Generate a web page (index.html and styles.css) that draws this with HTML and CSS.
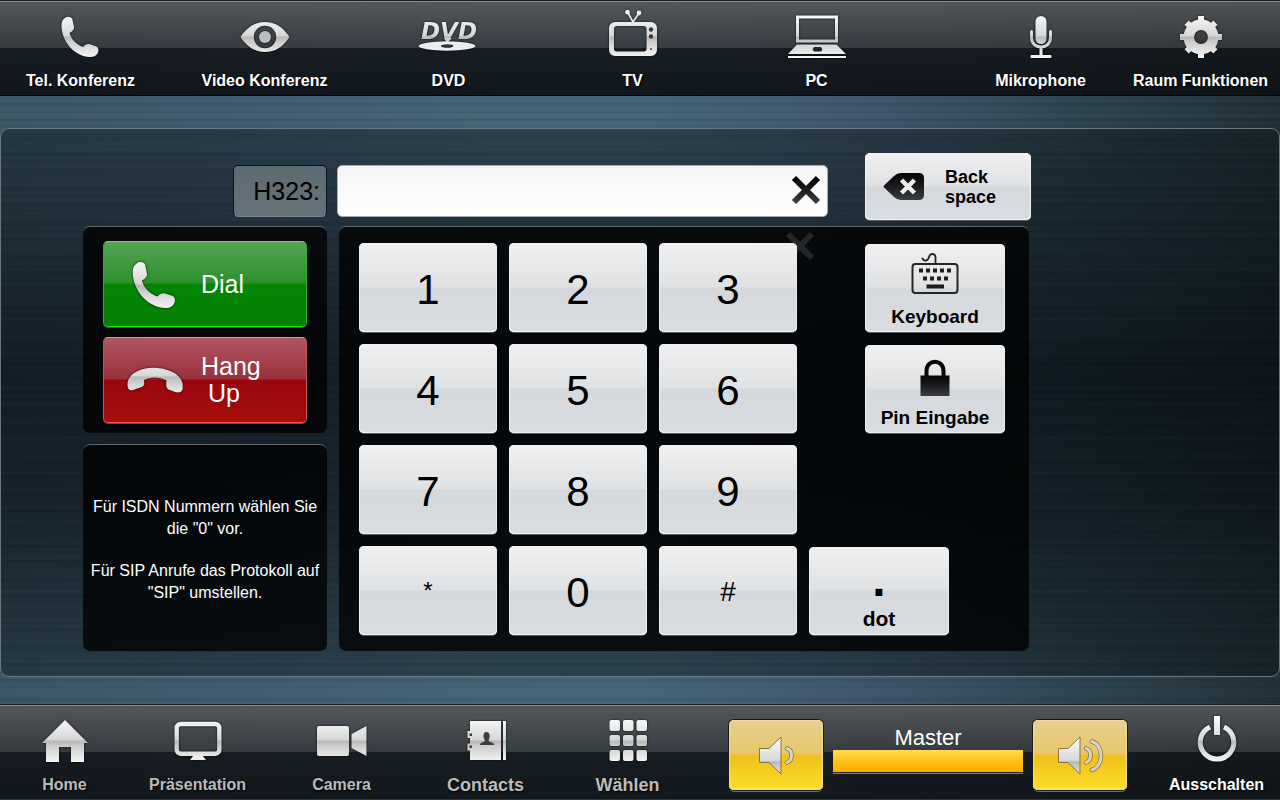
FILE: index.html
```html
<!DOCTYPE html>
<html lang="de">
<head>
<meta charset="utf-8">
<meta name="viewport" content="width=device-width, initial-scale=1">
<title>Video Konferenz</title>
<link rel="stylesheet" href="styles.css">
</head>
<body>
<svg class="defs" width="0" height="0" aria-hidden="true">
  <defs>
    <linearGradient id="metal" gradientUnits="userSpaceOnUse" x1="0" y1="6" x2="0" y2="50">
      <stop offset="0" stop-color="#fafafa"/>
      <stop offset=".5" stop-color="#d6d6d6"/>
      <stop offset=".52" stop-color="#b8b8b8"/>
      <stop offset=".66" stop-color="#d0d0d0"/>
      <stop offset="1" stop-color="#f6f6f6"/>
    </linearGradient>
    <linearGradient id="ink" x1="0" y1="0" x2="0" y2="1">
      <stop offset="0" stop-color="#030303"/>
      <stop offset=".5" stop-color="#1c1c1e"/>
      <stop offset="1" stop-color="#3c3d40"/>
    </linearGradient>
    <symbol id="phone" viewBox="0 0 64 56">
      <path fill="url(#metal)" d="M16 10C18 8.300 21.500 8.300 23.300 11L25 19C25.300 22 22.500 24 20.500 24.800C22 31 27 36.500 34 39C36 36.500 38.500 35.600 41 36.300L47 38.300C50 39.500 50 43 48.500 45.500C47 48 45 49 41 49C25 48.500 12.500 33 12.500 17.500C12.500 14 13.500 11.500 16 10Z"/>
    </symbol>
  </defs>
</svg>

<header class="bar">
  <nav class="sources" aria-label="Quellen">
    <button class="tool" type="button">
      <svg class="tool-icon" viewBox="0 0 64 56"><use href="#phone"/></svg>
      <span>Tel. Konferenz</span>
    </button>
    <button class="tool" type="button">
      <svg class="tool-icon" viewBox="0 0 64 56">
        <path fill="url(#metal)" fill-rule="evenodd" d="M7.500 29C14 19 22 14 32 14S50 19 56.500 29C50 39 42 44 32 44S14 39 7.500 29ZM32 17.800A11.200 11.200 0 1 0 32 40.200A11.200 11.200 0 1 0 32 17.800Z"/>
        <circle cx="32" cy="29" r="6" fill="#bcbdbe"/>
      </svg>
      <span>Video Konferenz</span>
    </button>
    <button class="tool" type="button">
      <svg class="tool-icon" viewBox="0 0 64 56">
        <text class="disc-word" x="32" y="31" text-anchor="middle" fill="url(#metal)">DVD</text>
        <path fill="#cfcfcf" d="M27 30h8l-5 5z"/>
        <path fill="#ededed" fill-rule="evenodd" d="M1.500 38a28.500 4.700 0 1 0 57 0a28.500 4.700 0 1 0-57 0ZM24 38a6.200 1.800 0 1 1 12.400 0a6.200 1.800 0 1 1-12.400 0Z"/>
      </svg>
      <span>DVD</span>
    </button>
    <button class="tool" type="button">
      <svg class="tool-icon" viewBox="0 0 64 56">
        <path stroke="#e4e4e4" stroke-width="1.800" fill="none" d="M26.500 4L32 14L38 5"/>
        <circle cx="26.500" cy="4.200" r="2.400" fill="#eee"/>
        <circle cx="38" cy="5" r="2.400" fill="#eee"/>
        <path fill="url(#metal)" fill-rule="evenodd" d="M14 14H50a6 6 0 0 1 6 6V42a6 6 0 0 1-6 6H14a6 6 0 0 1-6-6V20a6 6 0 0 1 6-6ZM16 18a3 3 0 0 0-3 3V40.500a3 3 0 0 0 3 3H42.500a3 3 0 0 0 3-3V21a3 3 0 0 0-3-3Z"/>
        <circle cx="50" cy="21.500" r="2.200" fill="#343a3e"/>
        <circle cx="50" cy="28.500" r="2.200" fill="#343a3e"/>
        <circle cx="50" cy="41" r="1" fill="#343a3e"/>
      </svg>
      <span>TV</span>
    </button>
    <button class="tool" type="button">
      <svg class="tool-icon" viewBox="0 0 64 56">
        <rect x="12.500" y="9" width="39" height="24" fill="none" stroke="url(#metal)" stroke-width="3"/>
        <path fill="url(#metal)" d="M12 36.500H51.500L61 46H3ZM3 48H61V50H3Z"/>
        <path fill="#20272c" d="M29 39h7l1.500 2.500l-1.500 2h-7l-1.500-2z"/>
      </svg>
      <span>PC</span>
    </button>
  </nav>
  <nav class="room" aria-label="Raum">
    <button class="tool" type="button">
      <svg class="tool-icon" viewBox="0 0 64 56">
        <rect x="26.500" y="8" width="11" height="28" rx="5.500" fill="url(#metal)"/>
        <path fill="none" stroke="url(#metal)" stroke-width="3" stroke-linecap="round" d="M22.500 23.500V29.500C22.500 42 41.500 42 41.500 29.500V23.500M32 39V48"/>
        <rect x="21.500" y="47" width="21" height="3" rx="1" fill="#f2f2f2"/>
      </svg>
      <span>Mikrophone</span>
    </button>
    <button class="tool" type="button">
      <svg class="tool-icon" viewBox="0 0 64 56">
        <circle cx="32" cy="29" r="12.200" fill="none" stroke="url(#metal)" stroke-width="10.600"/>
        <path stroke="url(#metal)" stroke-width="6" d="M32.010 8L32 15M32.010 43L32 50M11 29.010L18 29M46 29.010L53 29M21.500 18.500L17.600 14.600M42.500 18.500L46.400 14.600M21.500 39.500L17.600 43.400M42.500 39.500L46.400 43.400"/>
      </svg>
      <span>Raum Funktionen</span>
    </button>
  </nav>
</header>

<main class="stage">
  <form class="dialer">
    <div class="entry">
      <label class="protocol" for="number">H323:</label>
      <div class="field">
        <input class="number" id="number" type="text">
        <button class="clear" type="button" aria-label="Eingabe löschen">
          <svg viewBox="0 0 30 30" width="30" height="30"><path stroke="url(#ink)" stroke-width="6" d="M3 3L27 27M27 3L3 27"/></svg>
        </button>
      </div>
      <button class="key backspace" type="button">
        <svg viewBox="0 0 41 27" width="41" height="27"><path fill="url(#ink)" d="M1 12.500L11 3Q14 0 18 0H36Q41 0 41 5V22Q41 27 36 27H18Q14 27 11 24L1 14.500Q0 13.500 1 12.500Z"/><path stroke="#eceded" stroke-width="4.500" d="M18.500 7L31.500 20M31.500 7L18.500 20"/></svg>
        <span>Back<br>space</span>
      </button>
    </div>

    <div class="side">
      <section class="well calls">
        <button class="call dial" type="button">
          <svg class="call-icon" viewBox="0 0 64 56"><use href="#phone"/></svg>
          <span>Dial</span>
        </button>
        <button class="call hang" type="button">
          <svg class="call-icon" viewBox="0 0 74 64"><path fill="url(#metal)" d="M9.500 35C11 25 23 19.700 36 19.700C50 20 63 26 64.700 36V41C64 44.500 60 45 57 44L50.500 41.500C48 40 48 37 48.500 32.500C42 28.500 32 28.500 26 32C26.500 35 26.500 37.500 24.500 38.800L15 42C11 43 9 40.500 9.500 35Z"/></svg>
          <span>Hang<br><span class="up">Up</span></span>
        </button>
      </section>
      <section class="well note">
        <p>Für ISDN Nummern wählen Sie die "0" vor.</p>
        <p>Für SIP Anrufe das Protokoll auf "SIP" umstellen.</p>
      </section>
    </div>

    <section class="well keypad">
      <svg class="ghost" viewBox="0 0 30 30" width="30" height="30" aria-hidden="true"><path stroke="#242628" stroke-width="6" d="M3 3L27 27M27 3L3 27"/></svg>
      <button class="key digit" type="button">1</button>
      <button class="key digit" type="button">2</button>
      <button class="key digit" type="button">3</button>
      <button class="key extra" type="button">
        <svg viewBox="0 0 48 42" width="48" height="42">
          <rect x="1.500" y="11" width="45" height="29" rx="3" fill="none" stroke="#252628" stroke-width="2"/>
          <path fill="none" stroke="#252628" stroke-width="1.800" d="M11 5C13 9 17 8 18 4C19 0 24 0 24.500 4V10"/>
          <path fill="none" stroke="#1c1d1f" stroke-width="4" stroke-dasharray="4 3" d="M8 17.500H41"/>
          <path fill="none" stroke="#1c1d1f" stroke-width="4" stroke-dasharray="4 3" d="M12 25.500H37"/>
          <path stroke="#1c1d1f" stroke-width="4" d="M15.500 33.500H33"/>
        </svg>
        <span>Keyboard</span>
      </button>
      <button class="key digit" type="button">4</button>
      <button class="key digit" type="button">5</button>
      <button class="key digit" type="button">6</button>
      <button class="key extra" type="button">
        <svg viewBox="0 0 48 42" width="48" height="42">
          <path fill="none" stroke="#050505" stroke-width="4" d="M15.500 23V17C15.500 4.500 32.500 4.500 32.500 17V23"/>
          <rect x="9.500" y="21.500" width="29" height="20.500" fill="url(#ink)"/>
        </svg>
        <span>Pin Eingabe</span>
      </button>
      <button class="key digit" type="button">7</button>
      <button class="key digit" type="button">8</button>
      <button class="key digit" type="button">9</button>
      <button class="key star" type="button">*</button>
      <button class="key digit" type="button">0</button>
      <button class="key hash" type="button">#</button>
      <button class="key dot" type="button"><span class="dot-mark">.</span><span>dot</span></button>
    </section>
  </form>
</main>

<footer class="bar bottom">
  <nav class="pages" aria-label="Seiten">
    <button class="tool muted" type="button">
      <svg class="tool-icon" viewBox="0 0 64 56"><path fill="url(#metal)" d="M32 8L55 31H51V50H38V35H26V50H13V31H9Z"/></svg>
      <span>Home</span>
    </button>
    <button class="tool muted" type="button">
      <svg class="tool-icon" viewBox="0 0 64 56"><rect x="10.700" y="12" width="42.600" height="29.700" rx="4" fill="none" stroke="url(#metal)" stroke-width="4.400"/><path fill="#eee" d="M28 43H36L40 48H24Z"/></svg>
      <span>Präsentation</span>
    </button>
    <button class="tool muted" type="button">
      <svg class="tool-icon" viewBox="0 0 64 56"><rect x="7" y="14" width="32" height="30" rx="2" fill="url(#metal)"/><path fill="url(#metal)" d="M41.500 22L56.500 14V44L41.500 36Z"/></svg>
      <span>Camera</span>
    </button>
    <button class="tool muted large" type="button">
      <svg class="tool-icon" viewBox="0 0 64 56">
        <path fill="url(#metal)" d="M16 9H47V48H16V38.500H13.500V31.500H16V26H13.500V19H16ZM49 9H52V48H49Z"/>
        <path fill="#3a3e41" d="M15.500 21.500h2.500v2.500h-2.500zM15.500 33.500h2.500v2.500h-2.500zM26 33C26 30 30 30.500 31 28.500C28.500 25 29 20 32.500 20S36.500 25 34.500 28.500C35.500 30.500 40 30 40 33Z"/>
      </svg>
      <span>Contacts</span>
    </button>
    <button class="tool muted large" type="button">
      <svg class="tool-icon" viewBox="0 0 64 56">
        <g fill="url(#metal)">
          <rect x="13.500" y="8" width="10.500" height="11" rx="2"/><rect x="27" y="8" width="10.500" height="11" rx="2"/><rect x="40.500" y="8" width="10.500" height="11" rx="2"/>
          <rect x="13.500" y="23" width="10.500" height="11" rx="2"/><rect x="27" y="23" width="10.500" height="11" rx="2"/><rect x="40.500" y="23" width="10.500" height="11" rx="2"/>
          <rect x="13.500" y="38" width="10.500" height="11" rx="2"/><rect x="27" y="38" width="10.500" height="11" rx="2"/><rect x="40.500" y="38" width="10.500" height="11" rx="2"/>
        </g>
      </svg>
      <span>Wählen</span>
    </button>
  </nav>
  <div class="volume">
    <button class="level" type="button" aria-label="Leiser">
      <svg viewBox="0 0 60 44" width="60" height="44">
        <path fill="url(#metal)" stroke="#8a7440" d="M13.500 15.500H23L35 4V41L23 29.500H13.500Z"/>
        <path fill="none" stroke="#8a7440" stroke-width="4.500" stroke-linecap="round" d="M41 15.500C47 17 47 27 41 29.500"/>
        <path fill="none" stroke="#d6d2c8" stroke-width="3" stroke-linecap="round" d="M41 15.500C47 17 47 27 41 29.500"/>
      </svg>
    </button>
    <div class="master">
      <label for="master">Master</label>
      <input class="slider" id="master" type="range" min="0" max="100" value="100">
    </div>
    <button class="level" type="button" aria-label="Lauter">
      <svg viewBox="0 0 60 44" width="60" height="44">
        <path fill="url(#metal)" stroke="#8a7440" d="M8.500 15.500H18L30 4V41L18 29.500H8.500Z"/>
        <path fill="none" stroke="#8a7440" stroke-width="4.500" stroke-linecap="round" d="M36 15.500C42 17 42 27 36 29.500M42 8.500C54 12 54 33 42 37"/>
        <path fill="none" stroke="#d6d2c8" stroke-width="3" stroke-linecap="round" d="M36 15.500C42 17 42 27 36 29.500M42 8.500C54 12 54 33 42 37"/>
      </svg>
    </button>
  </div>
  <button class="tool power" type="button">
    <svg class="tool-icon" viewBox="0 0 64 56"><path fill="none" stroke="url(#metal)" stroke-width="5" d="M25 15A16.800 16.800 0 1 0 39 15"/><rect x="29" y="4" width="6" height="19" fill="url(#metal)"/></svg>
    <span>Ausschalten</span>
  </button>
</footer>
</body>
</html>
```
FILE: styles.css
```css
* {
  box-sizing: border-box;
}

body {
  margin: 0;
  min-height: 100vh;
  display: flex;
  flex-direction: column;
  color: #fff;
  font-family: "Liberation Sans", Arial, sans-serif;
  font-size: 16px;
  background:
    repeating-linear-gradient(rgba(0, 0, 0, .07) 0 1px, transparent 1px 3px, rgba(255, 255, 255, .02) 3px 4px, transparent 4px 7px),
    repeating-linear-gradient(rgba(0, 0, 0, .06) 0 2px, transparent 4px 11px, rgba(255, 255, 255, .02) 13px, transparent 17px),
    linear-gradient(transparent 16%, rgba(6, 8, 18, .62) 46%, rgba(6, 8, 18, .5) 62%, transparent 84%),
    linear-gradient(90deg, #3b5665 0%, #425b72 20%, #456577 38%, #456578 50%, #41596f 64%, #3a5165 73%, #2e4652 83%, #213038 100%);
}

button,
input {
  margin: 0;
  font: inherit;
}

button {
  padding: 0;
  border: 0;
  color: inherit;
  background: none;
}

.defs {
  position: absolute;
}

/* Top and bottom bars */
.bar {
  display: flex;
  justify-content: space-between;
  height: 96px;
  border-top: 1px solid #1b2025;
  border-bottom: 1px solid #050607;
  background: linear-gradient(rgba(86, 87, 88, .9), rgba(52, 55, 58, .88) 50%, rgba(18, 22, 26, .9) 50%, rgba(12, 16, 20, .9));
  box-shadow: inset 0 1px #85888b;
}

.sources,
.room,
.pages {
  display: flex;
}

.sources {
  gap: 24px;
}

.pages {
  display: grid;
  grid-template-columns: 128px 138px 150px 138px 146px;
}

.tool {
  display: flex;
  flex-direction: column;
  align-items: center;
  gap: 5px;
  width: 160px;
  padding: 7px 0 0 1px;
  font-weight: bold;
  line-height: 24px;
  white-space: nowrap;
  text-shadow: 1px 1px 2px #000;
}

.pages .tool {
  width: auto;
}

.power {
  width: 128px;
}

.muted {
  color: #bbb;
}

.large {
  font-size: 18px;
}

.tool-icon {
  width: 64px;
  height: 56px;
  filter: drop-shadow(0 0 1px rgba(0, 0, 0, .8));
}

.disc-word {
  font: italic bold 23px "DejaVu Sans", sans-serif;
  text-shadow: none;
}

/* Middle area */
.stage {
  flex: 1;
  padding: 32px 0 27px;
}

.dialer {
  display: grid;
  grid-template-columns: 244px minmax(0, 1fr);
  gap: 5px 12px;
  min-height: 100%;
  padding: 24px 250px 25px 82px;
  border: 1px solid #69777f;
  border-radius: 9px;
  background: rgba(8, 16, 20, .42);
}

.entry {
  grid-column: 1 / -1;
  display: flex;
  align-items: flex-end;
  padding-left: 150px;
}

.protocol {
  width: 94px;
  height: 52px;
  margin: 0 10px 4px 0;
  padding-right: 6px;
  border: 1px solid #0d1316;
  border-bottom-color: #7c878d;
  border-radius: 5px;
  color: #000;
  background: linear-gradient(#5f6b72, #66727a);
  font-size: 25px;
  line-height: 51px;
  text-align: right;
}

.field {
  position: relative;
  flex: 1;
  height: 52px;
  margin: 0 37px 4px 0;
}

.number {
  width: 100%;
  height: 100%;
  padding: 0 48px 0 12px;
  border: 1px solid #a9a9aa;
  border-radius: 5px;
  background: linear-gradient(#f5f5f5, #fff);
  font-size: 25px;
}

.clear {
  position: absolute;
  top: 10px;
  right: 7px;
  width: 30px;
  height: 30px;
}

.clear svg {
  display: block;
}

.key {
  height: 89px;
  border-radius: 5px;
  color: #000;
  background: linear-gradient(#f0f0f1, #dfe1e3 49%, #d5d9dd 51%, #d9dde1);
  box-shadow: inset 0 0 0 1px #f0f0f1, inset 0 -1px #fff, 0 1px #5b5f62;
}

.backspace {
  display: flex;
  align-items: center;
  gap: 21px;
  width: 166px;
  height: 67px;
  margin: 0 -2px 1px 0;
  padding-left: 18px;
  font-size: 18px;
  font-weight: bold;
  line-height: 20px;
  text-align: left;
}

.well {
  border-top: 1px solid #5d676c;
  border-radius: 7px;
  background: rgba(0, 0, 0, .77);
}

.side {
  display: grid;
  grid-template-rows: 1fr 1fr;
  gap: 11px;
}

.calls {
  display: flex;
  flex-direction: column;
  gap: 10px;
  padding: 14px 20px 10px;
}

.call {
  flex: 1;
  display: flex;
  align-items: center;
  gap: 9px;
  padding-left: 14px;
  border: 1px solid;
  border-radius: 5px;
  font-size: 25px;
  line-height: 27px;
}

.call-icon {
  width: 74px;
  height: 64px;
  filter: drop-shadow(0 0 1px rgba(0, 0, 0, .9));
}

.up {
  padding-right: 14px;
}

.dial {
  border-color: #8cc48c #30ae30 #1ee01e;
  background: linear-gradient(#55a555, #2b902b 49%, #048604 50%, #028002);
  box-shadow: 0 1px #4d564d;
}

.hang {
  border-color: #d09ba2 #c45058 #ef5a50;
  background: linear-gradient(#b05762, #99303a 49%, #9a060c 50%, #a60d0d);
  box-shadow: 0 1px #5f5252;
}

.note {
  display: flex;
  flex-direction: column;
  justify-content: center;
  gap: 20px;
  padding: 4px 6px 0;
  line-height: 22px;
  text-align: center;
}

.note p {
  margin: 0;
}

.keypad {
  position: relative;
  z-index: 0;
  display: grid;
  grid-template-columns: repeat(3, minmax(0, 138fr)) minmax(0, 196fr);
  gap: 12px;
  align-content: start;
  padding: 16px 24px 16px 20px;
}

.ghost {
  position: absolute;
  z-index: -1;
  top: 4px;
  left: 446px;
}

.digit {
  padding-top: 4px;
  font-size: 42px;
}

.star {
  grid-column: 1;
  font-size: 24px;
}

.hash {
  padding-top: 2px;
  font-size: 28px;
}

.extra {
  display: flex;
  flex-direction: column;
  align-items: center;
  gap: 11px;
  justify-self: end;
  align-self: end;
  width: 140px;
  height: 88px;
  padding-top: 9px;
  font-size: 19px;
  font-weight: bold;
  line-height: 22px;
}

.dot {
  display: flex;
  flex-direction: column;
  align-items: center;
  align-self: end;
  justify-content: flex-end;
  gap: 11px;
  width: 140px;
  height: 88px;
  padding-bottom: 4px;
  font-size: 21px;
  font-weight: bold;
  line-height: 24px;
}

.dot-mark {
  font-size: 48px;
  line-height: 32px;
}

/* Volume */
.bottom {
  border-bottom-color: #33373a;
}

.volume {
  flex: 1;
  display: flex;
  gap: 10px;
  padding: 15px 25px 10px 29px;
}

.level {
  display: grid;
  place-items: center;
  width: 94px;
  height: 70px;
  border-radius: 5px;
  background: linear-gradient(#e6cf92, #e8c768 49%, #efbe1c 50%, #fbe02a);
  box-shadow: inset 0 0 0 1px #f2dc96, inset 0 -2px #fbe84a, 0 0 0 1px #15181a, 0 2px #6b6f72;
}

.master {
  flex: 1;
  display: flex;
  flex-direction: column;
  padding-top: 5px;
  font-size: 22px;
  line-height: 25px;
  text-align: center;
}

.slider {
  appearance: none;
  width: 100%;
  height: 22px;
  background: linear-gradient(#ffdc50, #ffb905 70%, #fcae04);
  box-shadow: 0 1px #2c2410, 0 2px #7b7d80;
}

.slider::-webkit-slider-thumb {
  appearance: none;
  width: 1px;
  height: 22px;
}
```
